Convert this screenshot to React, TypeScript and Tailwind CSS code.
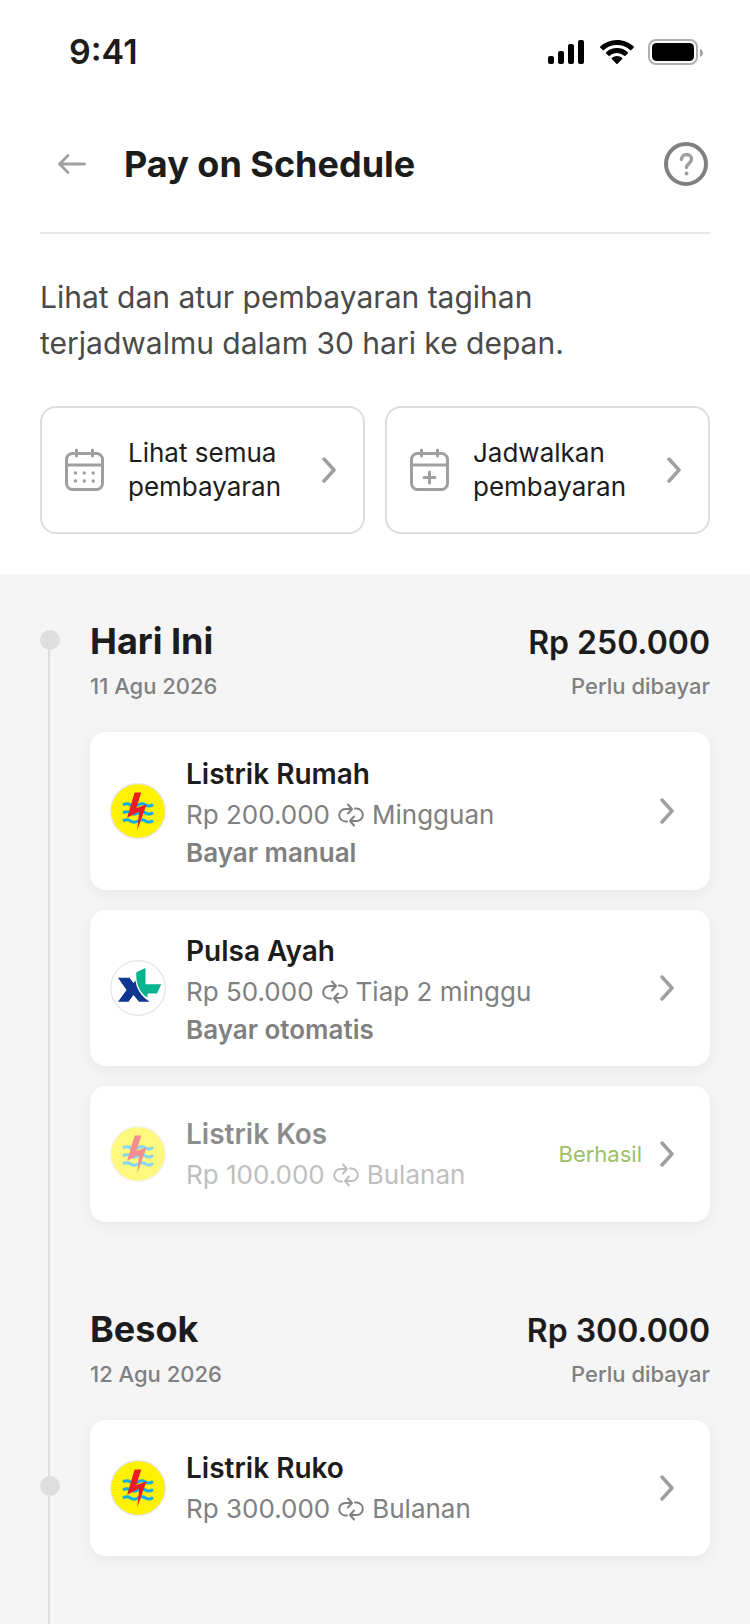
import React from 'react';

type Payment = {
  id: string;
  name: string;
  amount: string;
  repeat: string;
  method?: string;
  logo: 'pln' | 'xl';
  status?: string;
  size?: string;
};

type Day = {
  title: string;
  date: string;
  total: string;
  marker: 'header' | 'item';
  payments: Payment[];
};

const days: Day[] = [
  {
    title: 'Hari Ini',
    date: '11 Agu 2026',
    total: 'Rp 250.000',
    marker: 'header',
    payments: [
      { id: 'rumah', name: 'Listrik Rumah', amount: 'Rp 200.000', repeat: 'Mingguan', method: 'Bayar manual', logo: 'pln', size: 'min-h-[158px]' },
      { id: 'ayah', name: 'Pulsa Ayah', amount: 'Rp 50.000', repeat: 'Tiap 2 minggu', method: 'Bayar otomatis', logo: 'xl' },
      { id: 'kos', name: 'Listrik Kos', amount: 'Rp 100.000', repeat: 'Bulanan', logo: 'pln', status: 'Berhasil' },
    ],
  },
  {
    title: 'Besok',
    date: '12 Agu 2026',
    total: 'Rp 300.000',
    marker: 'item',
    payments: [{ id: 'ruko', name: 'Listrik Ruko', amount: 'Rp 300.000', repeat: 'Bulanan', logo: 'pln' }],
  },
];

function StatusBar() {
  return (
    <div className="flex h-[104px] items-center justify-between pl-[69px] pr-[46px]">
      <span className="text-[34px] font-semibold leading-10">9:41</span>
      <div className="flex items-center gap-4">
        <svg width="36" height="26" viewBox="0 0 36 26" aria-hidden="true">
          <rect x="0" y="17" width="6" height="8" rx="2" />
          <rect x="10" y="12" width="6" height="13" rx="2" />
          <rect x="20" y="5" width="6" height="20" rx="2" />
          <rect x="30" y="1" width="6" height="24" rx="2" />
        </svg>
        <svg width="34" height="26" viewBox="0 0 34 26" aria-hidden="true">
          <path d="M17 1c6.4 0 12.3 2.4 16.7 6.5.3.3.3.9 0 1.2l-2.4 2.4a.8.8 0 0 1-1.2 0A19.2 19.2 0 0 0 17 6a19.2 19.2 0 0 0-13.1 5.100a.8.8 0 0 1-1.2 0L.3 8.7a.8.8 0 0 1 0-1.2A24.4 24.4 0 0 1 17 1z" />
          <path d="M17 9c4.200 0 8 1.6 10.8 4.2.4.3.4.8 0 1.2l-2.4 2.4a.8.8 0 0 1-1.2 0A10.6 10.6 0 0 0 17 14c-2.700 0-5.2 1-7.2 2.8a.8.8 0 0 1-1.2 0l-2.4-2.4a.8.8 0 0 1 0-1.2A15.9 15.9 0 0 1 17 9z" />
          <path d="M17 17c2 0 3.8.7 5.2 1.9.4.3.4.8 0 1.2l-4.6 4.6a.9.9 0 0 1-1.2 0l-4.6-4.6a.8.8 0 0 1 0-1.2A8 8 0 0 1 17 17z" />
        </svg>
        <svg className="-ml-0.5" width="56" height="26" viewBox="0 0 56 26" aria-hidden="true">
          <rect x="1" y="1" width="48" height="24" rx="7" fill="none" stroke="#b0b0b0" strokeWidth="2" />
          <rect x="4" y="4" width="42" height="18" rx="4.5" />
          <path d="M52 10v8c1.7-.6 3-2.2 3-4s-1.3-3.4-3-4z" fill="#a0a0a0" />
        </svg>
      </div>
    </div>
  );
}

function Chevron() {
  return (
    <svg className="shrink-0" width="14" height="26" viewBox="0 0 14 26" fill="none" stroke="#9f9f9f" strokeWidth="3.5" strokeLinecap="round" strokeLinejoin="round" aria-hidden="true">
      <path d="M2 2l10 11L2 24" />
    </svg>
  );
}

function CalendarIcon({ plus = false }: { plus?: boolean }) {
  return (
    <svg className="shrink-0" width="40" height="44" viewBox="0 0 40 44" fill="none" stroke="#9f9f9f" strokeWidth="3" strokeLinecap="round" aria-hidden="true">
      <rect x="2.5" y="5.5" width="36" height="36" rx="6" />
      <path d="M2.500 17h36M12.500 2v6M28.500 2v6" />
      {plus ? (
        <path d="M20.500 24v11M15 29.500h11" />
      ) : (
        <g fill="#9f9f9f" stroke="none">
          <circle cx="11.5" cy="25" r="1.7" />
          <circle cx="20.3" cy="25" r="1.7" />
          <circle cx="29.2" cy="25" r="1.7" />
          <circle cx="11.5" cy="33" r="1.7" />
          <circle cx="20.3" cy="33" r="1.7" />
          <circle cx="29.2" cy="33" r="1.7" />
        </g>
      )}
    </svg>
  );
}

function RepeatIcon() {
  return (
    <svg className="shrink-0" width="26" height="24" viewBox="0 0 26 24" fill="none" stroke="currentColor" strokeWidth="2" strokeLinecap="round" strokeLinejoin="round" aria-hidden="true">
      <path d="M9 18.500H7.500a6.300 6.300 0 0 1 0-12.600H13.500M10 1.500L14 6l-4 4.500" />
      <path d="M17 5.500H18.500a6.300 6.300 0 0 1 0 12.600H12.500M16 13.500l-4 4.500 4 4.500" />
    </svg>
  );
}

function Logo({ kind }: { kind: 'pln' | 'xl' }) {
  if (kind === 'xl') {
    return (
      <svg className="shrink-0" width="56" height="56" viewBox="0 0 56 56" aria-hidden="true">
        <circle cx="28" cy="28" r="27.3" fill="#fff" stroke="#e6e6e6" strokeWidth="1.3" />
        <path d="M8 17.700h11.500l4 5.300 2-2.600C26.300 28.500 31 36 39.700 41.700H29L23.500 35l-5 6.700H8L16.500 30z" fill="#0f3592" />
        <path d="M26.300 12.300L35.500 8v16.200h15.800l-4.300 9.400h-9.500v3.900C29.500 33.500 25.500 23 26.300 12.300z" fill="#08b48d" />
      </svg>
    );
  }
  return (
    <svg className="shrink-0" width="56" height="56" viewBox="0 0 56 56" aria-hidden="true">
      <circle cx="28" cy="28" r="27.3" fill="#fff200" stroke="#e6e6e6" strokeWidth="1.3" />
      <g fill="none" stroke="#0dadea" strokeWidth="3">
        <path d="M13 22q4-2.400 7.500 0t7.500 0 7.500 0 7.500-.5" />
        <path d="M13 30q4-2.400 7.500 0t7.500 0 7.500 0 7.500-.5" />
        <path d="M13 38q4-2.400 7.500 0t7.500 0 7.500 0 7.500-.5" />
      </g>
      <path d="M24.600 9.600h6.700L26.300 25l10.200-3.500L27.300 47l1.900-18.500L17.100 34.700z" fill="#ed1c24" />
    </svg>
  );
}

function PaymentCard({ payment }: { payment: Payment }) {
  const fade = payment.status ? 'opacity-50' : '';

  return (
    <button
      type="button"
      className={`flex w-full items-center gap-5 rounded-2xl bg-white py-[19px] pl-5 pr-9 text-left shadow-[0_4px_16px_rgba(0,0,0,0.06)] ${payment.size ?? 'min-h-[136px]'}`}
    >
      <span className={`shrink-0 ${fade}`}>
        <Logo kind={payment.logo} />
      </span>
      <span className={`flex flex-1 flex-col pt-0.5 ${fade}`}>
        <span className="text-[28px] font-semibold leading-10">{payment.name}</span>
        <span className="flex items-center gap-2 text-[26px] leading-[42px] text-[#808080]">
          {payment.amount}
          <RepeatIcon />
          {payment.repeat}
        </span>
        {payment.method && (
          <span className="text-[26px] font-semibold leading-[34px] text-[#808080]">{payment.method}</span>
        )}
      </span>
      <span className="flex items-center gap-[18px]">
        {payment.status && <span className="text-[22px] leading-9 text-[#9cc069]">{payment.status}</span>}
        <Chevron />
      </span>
    </button>
  );
}

const Line = ({ className }: { className: string }) => <span className={`ml-2 w-0.5 bg-[#dedede] ${className}`} />;
const Dot = () => <span className="size-5 rounded-full bg-[#dedede]" />;

function DaySection({ day }: { day: Day }) {
  return (
    <section className="grid grid-cols-[20px_1fr] grid-rows-[auto_1fr] gap-x-[30px] last:flex-1">
      {/* Rail next to the day heading */}
      <div className="flex flex-col">
        {day.marker === 'header' ? (
          <>
            <span className="h-4" />
            <Dot />
          </>
        ) : null}
        <Line className="flex-1" />
      </div>
      <header className="pb-7">
        <div className="flex items-baseline justify-between">
          <h2 className="text-[36px] font-bold leading-[54px]">{day.title}</h2>
          <p className="text-[32px] font-semibold leading-10">{day.total}</p>
        </div>
        <div className="flex justify-between text-[22px] font-medium leading-9 text-[#808080]">
          <p>{day.date}</p>
          <p>Perlu dibayar</p>
        </div>
      </header>

      {/* Rail next to the cards */}
      <div className="flex flex-col">
        {day.marker === 'item' ? (
          <>
            <Line className="h-14" />
            <Dot />
          </>
        ) : null}
        <Line className="flex-1" />
      </div>
      <div className={`flex flex-col gap-5 ${day.marker === 'item' ? 'pb-17' : 'pb-20'}`}>
        {day.payments.map((payment) => (
          <PaymentCard key={payment.id} payment={payment} />
        ))}
      </div>
    </section>
  );
}

function ShortcutButton({ label, plus }: { label: string[]; plus?: boolean }) {
  return (
    <button
      type="button"
      className="flex h-32 flex-1 items-center gap-6 rounded-2xl border-2 border-[#dedede] pl-[22px] pr-[27px] text-left text-[26px] leading-[34px]"
    >
      <CalendarIcon plus={plus} />
      <span className="flex-1">
        {label[0]}
        <br />
        {label[1]}
      </span>
      <Chevron />
    </button>
  );
}

export default function App() {
  return (
    <div className="flex min-h-screen flex-col bg-white font-['Inter',sans-serif] text-[#1c1c1c]">
      <StatusBar />

      <header className="mx-10 flex items-center border-b-2 border-[#e8e8e8] pb-[46px] pt-[38px]">
        <button type="button" aria-label="Kembali" className="ml-[18px]">
          <svg width="28" height="20" viewBox="0 0 28 20" fill="none" stroke="#a0a0a0" strokeWidth="2.8" strokeLinecap="round" strokeLinejoin="round">
            <path d="M26.500 10H1.500M10 1.500L1.500 10l8.500 8.500" />
          </svg>
        </button>
        <h1 className="ml-[38px] flex-1 text-[36px] font-bold leading-[44px]">Pay on Schedule</h1>
        <button type="button" aria-label="Bantuan" className="mr-0.5">
          <svg width="44" height="44" viewBox="0 0 44 44" fill="none" strokeLinecap="round" strokeLinejoin="round">
            <circle cx="22" cy="22" r="20" stroke="#808080" strokeWidth="4" />
            <path d="M17.500 17.500c0-3 2.300-5 5-5s5 2 5 4.700c0 4-5 4.300-5 8.300" stroke="#9f9f9f" strokeWidth="3.4" />
            <circle cx="22.5" cy="31.5" r="2" fill="#9f9f9f" />
          </svg>
        </button>
      </header>

      <div className="px-10 py-10">
        <p className="max-w-[600px] text-[30px] leading-[46px] text-[#4a4a4a]">
          Lihat dan atur pembayaran tagihan terjadwalmu dalam 30 hari ke depan.
        </p>
        <div className="mt-10 flex gap-5">
          <ShortcutButton label={['Lihat semua', 'pembayaran']} />
          <ShortcutButton label={['Jadwalkan', 'pembayaran']} plus />
        </div>
      </div>

      <main className="flex flex-1 flex-col bg-[#f5f5f5] px-10 pt-10">
        {days.map((day) => (
          <DaySection key={day.title} day={day} />
        ))}
      </main>
    </div>
  );
}
